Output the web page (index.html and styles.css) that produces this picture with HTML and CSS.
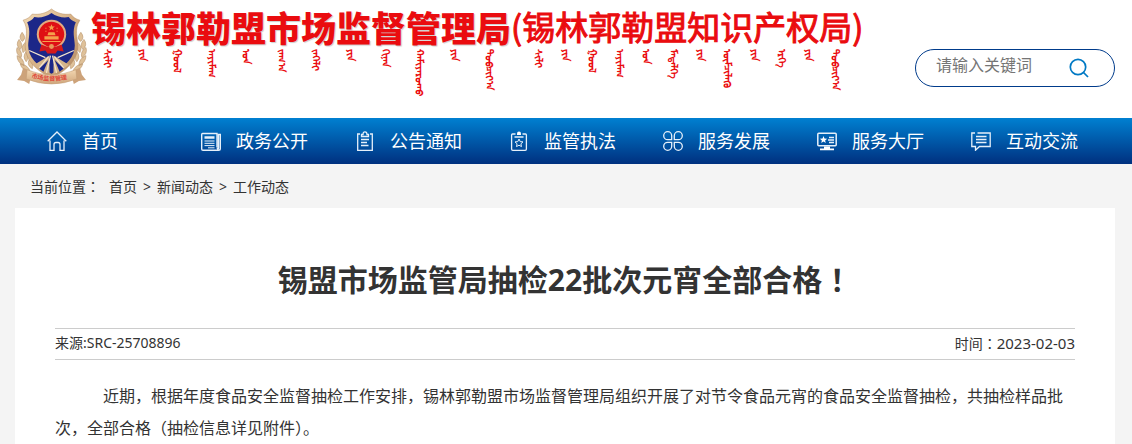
FILE: index.html
```html
<!DOCTYPE html>
<html lang="zh-CN">
<head>
<meta charset="utf-8">
<meta name="viewport" content="width=device-width, initial-scale=1">
<title>锡盟市场监管局抽检22批次元宵全部合格！</title>
<link rel="stylesheet" href="styles.css">
</head>
<body>
<header class="header wrap">
  <div class="brand">
    <svg class="emblem" viewBox="0 0 72 76" aria-hidden="true">
      <defs>
        <linearGradient id="gold" x1="0" y1="0" x2="1" y2="1">
          <stop offset="0" stop-color="#f3dcb8"/><stop offset=".5" stop-color="#d6b084"/><stop offset="1" stop-color="#b08660"/>
        </linearGradient>
        <linearGradient id="rib" x1="0" y1="0" x2="0" y2="1">
          <stop offset="0" stop-color="#f2d6b0"/><stop offset="1" stop-color="#d0a67c"/>
        </linearGradient>
      </defs>
      <g fill="#dfc199" stroke="#b8946c" stroke-width=".6">
        <path d="M7 24q-4 5 0 9q5-3 0-9zM4 31q-4 5 1 10q4-4-1-10zM2 39q-2 6 4 10q2-6-4-10zM2 47q0 7 7 10q0-7-7-10zM5 55q2 7 10 8q-2-7-10-8zM10 34q-5 5-2 10q5-4 2-10zM11 43q-4 5 0 10q4-4 0-10zM14 51q-3 5 3 9q2-5-3-9z"/>
        <path d="M65 24q4 5 0 9q-5-3 0-9zM68 31q4 5-1 10q-4-4 1-10zM70 39q2 6-4 10q-2-6 4-10zM70 47q0 7-7 10q0-7 7-10zM67 55q-2 7-10 8q2-7 10-8zM62 34q5 5 2 10q-5-4-2-10zM61 43q4 5 0 10q-4-4 0-10zM58 51q3 5-3 9q-2-5 3-9z"/>
      </g>
      <path d="M36 1C31 5 24 7 17 6C15 9 12 11 8 12C14 21 10 30 10 37C10 50 19 61 36 69C53 61 62 50 62 37C62 30 58 21 64 12C60 11 57 9 55 6C48 7 41 5 36 1Z" fill="url(#gold)" stroke="#b68b60" stroke-width=".5"/>
      <path d="M36 5C31 9 24 10 19 9C17 12 15 13 12 14C16 23 13 30 13 37C13 48 21 57 36 65C51 57 59 48 59 37C59 30 56 23 60 14C57 13 55 12 53 9C48 10 41 9 36 5Z" fill="#1c2788"/>
      <path d="M34 47L19 56L25 61L34 65ZM38 47L53 56L47 61L38 65Z" fill="#d5b48b"/>
      <path d="M35 47L31 64M37 47L41 64M33 48L24 59M39 48L48 59M14 42L30 49M58 42L42 49" stroke="#f4e5cd" stroke-width="1.2" fill="none"/>
      <path d="M33 51L24 60L28 63ZM39 51L48 60L44 63Z" fill="#1c2788"/>
      <circle cx="36" cy="26" r="14.500" fill="#e3ab80"/>
      <circle cx="36" cy="26" r="12.500" fill="#df1014"/>
      <path d="M36 16l.9 2.2 2.4.1-1.9 1.5.7 2.3-2.1-1.3-2.1 1.3.7-2.3-1.9-1.500 2.400-.1zM32 27h8l-1-3h-6zM29 31v-3h14v3z" fill="#f5a04b"/>
      <path d="M27 33h18M30 20h1M41 20h1M30 23h1M41 23h1" stroke="#f5a04b" stroke-width="1"/>
      <path d="M26 36Q36 41 46 36L48 43L42 42L40 45H32L30 42L24 43Z" fill="#d5191b"/>
      <circle cx="36" cy="38" r="2.400" fill="#e89a5a"/>
      <path d="M8 59L17 63L14 75L9 72L2 71L6 66ZM64 59L55 63L58 75L63 72L70 71L66 66Z" fill="#cda37a"/>
      <path d="M12 61Q36 71 60 61L61 70Q36 80 11 70Z" fill="url(#rib)" stroke="#c09a72" stroke-width=".5"/>
      <path id="arc" d="M16 68.500Q36 75 58 68.500" fill="none"/>
      <text class="emblem-text"><textPath href="#arc">市场监督管理</textPath></text>
    </svg>
    <div class="names">
      <div class="name-main">锡林郭勒盟市场监督管理局</div>
      <div class="name-sub">(锡林郭勒盟知识产权局)</div>
      <div class="mongol" lang="mn-Mong"><span>ᠰᠢᠯᠢ</span><span>ᠶᠢᠨ</span><span>ᠭᠣᠣᠯ</span><span>ᠠᠶᠢᠮᠠᠭ</span><span>ᠤᠨ</span><span>ᠵᠠᠬ᠎ᠠ</span><span>ᠵᠡᠭᠡᠯᠢ</span><span>ᠶᠢᠨ</span><span>ᠬᠢᠨᠠᠨ</span><span>ᠬᠠᠮᠢᠶᠠᠷᠤᠬᠤ</span><span>ᠶᠢᠨ</span><span>ᠲᠣᠪᠴᠢᠶ᠎ᠠ</span></div>
      <div class="mongol mongol-sub" lang="mn-Mong"><span>ᠰᠢᠯᠢ</span><span>ᠶᠢᠨ</span><span>ᠭᠣᠣᠯ</span><span>ᠠᠶᠢᠮᠠᠭ</span><span>ᠤᠨ</span><span>ᠮᠡᠳᠡᠯᠭᠡ</span><span>ᠶᠢᠨ</span><span>ᠥᠮᠴᠢᠯᠡᠬᠦ</span><span>ᠶᠢᠨ</span><span>ᠡᠷᠬᠡ</span><span>ᠶᠢᠨ</span><span>ᠲᠣᠪᠴᠢᠶ᠎ᠠ</span></div>
    </div>
  </div>
  <form class="search" role="search">
    <input class="search-input" type="text" placeholder="请输入关键词" aria-label="请输入关键词">
    <button class="search-btn" type="button" aria-label="搜索">
      <svg viewBox="0 0 20 20" width="20" height="20"><circle cx="9" cy="9" r="7.700"/><path d="M14.500 14.500L19 19"/></svg>
    </button>
  </form>
</header>

<nav class="nav">
  <ul class="nav-list wrap">
    <li><a href="#"><svg viewBox="0 0 20 20"><path d="M.7 10.300L10 1l9.300 9.300M3 9.500V19.300h4V13.500q0-2 2-2h2q2 0 2 2v5.800h4V9.500"/></svg><span>首页</span></a></li>
    <li><a href="#"><svg viewBox="0 0 20 20"><path d="M16 16.500V2.500H1.500Q.7 2.500.7 3.500V18Q.7 19.300 2 19.300H17.500Q19.300 19.300 19.300 17.500V3.500H17.500V16.500Q17.500 19 16 17" stroke-width="1.400"/><path d="M3.500 6.500h10" stroke-width="2.500"/><path d="M3.500 10h10M3.500 12.300h10M3.500 14.600h10M7 16.800h6.500" stroke-width="1"/></svg><span>政务公开</span></a></li>
    <li><a href="#"><svg viewBox="0 0 20 20"><path d="M5 3H2.700V19.300H17.300V3H15M6.500 5.500V3.500H8Q8 .8 10 .8T12 3.500H13.500V5.500ZM6 8.500h8M6 11.500h6M6 14.500h7.500"/></svg><span>公告通知</span></a></li>
    <li><a href="#"><svg viewBox="0 0 20 20"><path d="M6.500 3H3.500Q2.600 3 2.600 4V18Q2.600 19.300 3.800 19.300H16.200Q17.400 19.300 17.400 18V4Q17.400 3 16.500 3H13.500M5.500 6H14.500"/><path d="M10 8l1.200 2.600 2.800.3-2.100 1.900.6 2.800-2.500-1.400-2.500 1.400.6-2.800L6 10.900l2.800-.3z" stroke-width="1"/><path d="M8 4V2.500Q8 .5 10 .5T12 2.500V4Z" class="solid"/></svg><span>监管执法</span></a></li>
    <li><a href="#"><svg viewBox="0 0 20 20"><path d="M8.700 8.700V4.700A4 4 0 1 0 4.700 8.700ZM11.300 8.700V4.700A4 4 0 1 1 15.300 8.700ZM8.700 11.300V15.300A4 4 0 1 1 4.700 11.300ZM11.300 11.300V15.300A4 4 0 1 0 15.300 11.300Z"/></svg><span>服务发展</span></a></li>
    <li><a href="#"><svg viewBox="0 0 20 20"><rect x=".8" y="2.200" width="18.400" height="12.500" rx="1" stroke-width="1.500"/><path d="M6.500 5l1 2.500 2.700.2-2.100 1.700.7 2.600-2.300-1.400L4.200 12l.7-2.600L2.800 7.700l2.700-.2zM7 15.500h6v2h4v1.800H3v-1.800h4z" class="solid"/><path d="M12 6.500h5M11 9h6M12 11.500h5"/></svg><span>服务大厅</span></a></li>
    <li><a href="#"><svg viewBox="0 0 20 20"><path d="M4 2H.8V15.500H4.500V19.200L8.500 15.500H19.200V2H6.500M5 5.500H15.500M5 8.500H15.500M5 11.500H15.500"/></svg><span>互动交流</span></a></li>
  </ul>
</nav>

<main class="wrap">
  <div class="crumbs">
    <span>当前位置<span class="mid" lang="zh-TW">：</span></span>
    <a href="#">首页</a><span>&gt;</span><a href="#">新闻动态</a><span>&gt;</span><a href="#">工作动态</a>
  </div>
  <article class="card">
    <h1 class="title">锡盟市场监管局抽检22批次元宵全部合格<span class="mid" lang="zh-TW">！</span></h1>
    <div class="meta"><span>来源:SRC-25708896</span><span>时间<span class="mid" lang="zh-TW">：</span><time datetime="2023-02-03">2023-02-03</time></span></div>
    <p class="text">近期，根据年度食品安全监督抽检工作安排，锡林郭勒盟市场监督管理局组织开展了对节令食品元宵的食品安全监督抽检，共抽检样品批次，全部合格（抽检信息详见附件）。</p>
  </article>
</main>
</body>
</html>
```
FILE: styles.css
```css
* { box-sizing: border-box; }
body {
  margin: 0;
  background: #f4f4f4;
  color: #333;
  font-family: "Noto Sans", "Noto Sans CJK SC", sans-serif;
  font-size: 14px;
}
a { color: inherit; text-decoration: none; }
.wrap { padding-left: 15px; padding-right: 17px; }

.header {
  display: flex;
  justify-content: space-between;
  align-items: flex-start;
  height: 118px;
  background: #fff;
}
.brand { display: flex; gap: 3px; padding-top: 8px; }
.emblem { width: 73px; height: 77px; }
.emblem-text { font: bold 6px "Noto Sans CJK SC", sans-serif; fill: #e0483a; }
.names {
  display: grid;
  grid-template-columns: auto auto;
  grid-template-rows: 41px auto;
  font-family: "Noto Sans CJK SC", sans-serif;
  color: #ea0c0f;
  white-space: nowrap;
}
.name-main {
  font-size: 35px;
  line-height: 38px;
  font-weight: 900;
  text-shadow: 1px 1px 1px #ccc;
}
.name-sub {
  font-size: 33px;
  line-height: 36px;
  -webkit-text-stroke: 1px #ea0c0f;
}
.mongol {
  display: grid;
  grid-template-columns: repeat(12, 1fr);
  justify-items: center;
  align-items: start;
  padding-right: 4px;
  font-size: 10px;
  line-height: 14px;
  font-weight: bold;
}
.mongol-sub { padding: 0 14px; }
.mongol span { writing-mode: vertical-lr; }

.search {
  display: flex;
  align-items: center;
  width: 200px;
  height: 38px;
  margin-top: 49px;
  padding: 0 25px 0 20px;
  border: 1px solid #003b8b;
  border-radius: 19px;
  background: #fff;
}
.search-input {
  flex: 1;
  min-width: 0;
  height: 36px;
  padding: 0 0 8px;
  border: 0;
  outline: 0;
  background: none;
  font: 16px "Noto Sans CJK SC", sans-serif;
}
.search-input::placeholder { color: #757575; }
.search-btn { display: flex; padding: 0; border: 0; background: none; }
.search-btn svg { fill: none; stroke: #0079c4; stroke-width: 1.700; }

.nav { background: linear-gradient(#0080d1, #00307f); }
.nav-list {
  display: grid;
  grid-template-columns: repeat(7, 14%);
  margin: 0;
  padding-top: 0;
  padding-bottom: 0;
  list-style: none;
}
.nav a {
  display: flex;
  align-items: center;
  gap: 15px;
  height: 46px;
  padding-left: 32px;
  color: #fff;
  font-size: 18px;
  white-space: nowrap;
}
.nav a span { padding-bottom: 3px; }
.nav svg { flex: none; width: 20px; height: 20px; fill: none; stroke: #e6f0fa; stroke-width: 1.300; }
.nav .solid { fill: #fff; stroke: none; }

.mid { font-family: "Noto Sans CJK TC", sans-serif; line-height: 1; }
.crumbs {
  display: flex;
  gap: 6px;
  padding: 1px 0 0 15px;
  line-height: 44px;
  height: 44px;
}
.crumbs > span:first-child { margin-right: 3px; }

.card { padding: 51px 40px 0; background: #fff; }
.title { margin: 0; font-size: 30px; line-height: 42px; font-weight: bold; text-align: center; }
.meta {
  display: flex;
  justify-content: space-between;
  height: 32px;
  margin-top: 27px;
  border: solid #ccc;
  border-width: 1px 0;
  line-height: 28px;
}
.meta time { font-size: 15px; }
.text { margin: 20px 0 0; font-size: 16px; line-height: 32px; text-indent: 48px; }
```
